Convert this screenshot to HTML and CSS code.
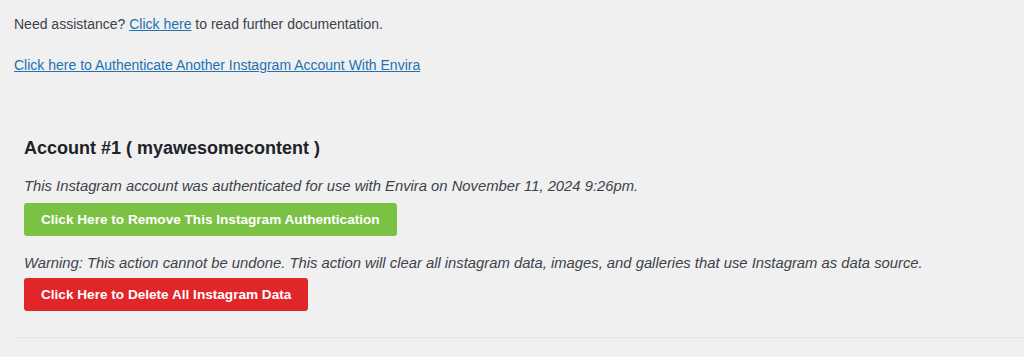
FILE: index.html
```html
<!DOCTYPE html>
<html lang="en">
<head>
  <meta charset="UTF-8" />
  <meta name="viewport" content="width=device-width, initial-scale=1.0"/>
  <title>Instagram Settings</title>
  <link rel="stylesheet" href="styles.css">
</head>
<body>
  <div class="wrap">
    <p class="help">Need assistance? <a href="#">Click here</a> to read further documentation.</p>
    <p class="auth-link"><a href="#">Click here to Authenticate Another Instagram Account With Envira</a></p>

    <div class="account">
      <h2>Account #1 ( myawesomecontent )</h2>
      <p class="note">This Instagram account was authenticated for use with Envira on November 11, 2024 9:26pm.</p>
      <a href="#" class="btn btn-green">Click Here to Remove This Instagram Authentication</a>

      <p class="note warning">Warning: This action cannot be undone. This action will clear all instagram data, images, and galleries that use Instagram as data source.</p>
      <a href="#" class="btn btn-red">Click Here to Delete All Instagram Data</a>
    </div>
    <hr class="divider">
  </div>
</body>
</html>
```

FILE: styles.css
```css
body {
  margin: 0;
  background: #f0f0f1;
  color: #3c434a;
  font-family: "Liberation Sans", Arial, sans-serif;
  font-size: 14px;
  line-height: 1.4;
}
.wrap { padding: 15px 0 0 14px; }
p { margin: 0; }
a { color: #2271b1; }
.help { margin-bottom: 21px; }
.account { padding: 62px 0 0 10px; }
h2 {
  margin: 0 0 15px;
  font-size: 18px;
  font-weight: bold;
  color: #1d2327;
  line-height: 1.3;
}
.note {
  font-style: italic;
  font-size: 14.8px;
  margin-bottom: 6.5px;
}
.warning { margin-top: 17px; margin-bottom: 4.5px; }
.btn {
  display: block;
  width: fit-content;
  height: 33px;
  line-height: 33px;
  padding: 0 17px;
  border-radius: 3px;
  color: #fff;
  font-weight: bold;
  font-size: 13.6px;
  text-decoration: none;
}
.btn-green { background: #7bc143; }
.btn-red { background: #e1262a; }
.divider {
  margin: 26px 0 0;
  border: 0;
  border-top: 1px solid #e4e4e5;
}
```
